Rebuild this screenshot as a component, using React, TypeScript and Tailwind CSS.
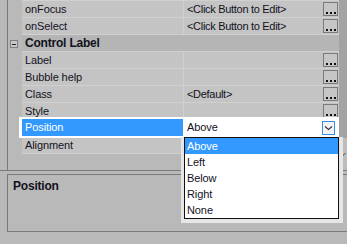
import React from "react";

type Row = {
  name: string;
  value?: string;
  button?: boolean;
  category?: boolean;
  short?: boolean;
};

const rows: Row[] = [
  { name: "onFocus", value: "<Click Button to Edit>", button: true },
  { name: "onSelect", value: "<Click Button to Edit>", button: true },
  { name: "Control Label", category: true },
  { name: "Label", button: true },
  { name: "Bubble help", button: true },
  { name: "Class", value: "<Default>", button: true },
];

const options = ["Above", "Left", "Below", "Right", "None"];

function EllipsisButton() {
  return (
    <div className="mt-[1px] flex h-[14px] w-[15px] items-end justify-start gap-[2px] border border-[#7a7a7a] bg-[#c6c6c6] pb-[1px] pl-[2px]">
      <span className="h-[2px] w-[2px] bg-[#111]" />
      <span className="h-[2px] w-[2px] bg-[#111]" />
      <span className="h-[2px] w-[2px] bg-[#111]" />
    </div>
  );
}

function PropertyRow({ row }: { row: Row }) {
  if (row.category) {
    return (
      <div className="flex h-[17px]">
        <div className="flex w-[14px] items-start pl-[2px] pt-[6px]">
          <div className="flex h-[8px] w-[8px] items-center justify-center border border-[#808080] bg-[#c8c8c8]">
            <span className="h-[1px] w-[4px] bg-[#222]" />
          </div>
        </div>
        <div className="flex-1 border-t border-[#d0d0d0] bg-[#b5b5b5] pl-[3px] text-[12px] font-bold leading-[16px] tracking-[-0.2px]">
          {row.name}
        </div>
      </div>
    );
  }
  return (
    <div className={`flex ${row.short ? "h-[15px]" : "h-[17px]"}`}>
      <div className="w-[14px]" />
      <div className="w-[162px] border-r border-t border-[#d0d0d0] bg-[#c4c4c4] pl-[3px] leading-[16px]">
        {row.name}
      </div>
      <div className="flex flex-1 justify-between border-t border-[#d0d0d0] bg-[#c4c4c4] pl-[3px] pr-[1px] leading-[16px] tracking-[-0.3px]">
        <span>{row.value ?? ""}</span>
        {row.button ? <EllipsisButton /> : null}
      </div>
    </div>
  );
}

export default function App() {
  return (
    <div
      className="relative h-[244px] w-[347px] overflow-hidden bg-[#b9b9b9] text-[11px] tracking-[-0.1px] text-[#12121c]"
      style={{ fontFamily: '"Liberation Sans", Arial, sans-serif' }}
    >
      <div className="flex h-[171px] border-b border-[#7a7a7a]">
        <div className="w-[7px]" />
        <div className="flex w-[332px] flex-col border-l border-[#7a7a7a]">
          {rows.map((row) => (
            <PropertyRow key={row.name} row={row} />
          ))}
          <PropertyRow row={{ name: "Style", button: true, short: true }} />

          <div className="flex h-[21px] bg-white">
            <div className="w-[11px] bg-[#b9b9b9]" />
            <div className="w-[3px]" />
            <div className="my-[2px] w-[161px] bg-[#3399ff] pl-[3px] leading-[17px] text-white">
              Position
            </div>
            <div className="flex flex-1 items-start justify-between pl-[4px] pr-[4px]">
              <span className="leading-[21px]">Above</span>
              <div className="mt-[4px] flex h-[14px] w-[13px] items-center justify-center border border-[#3a8ee6] bg-[#f4f4f4]">
                <svg width="9" height="6" viewBox="0 0 9 6">
                  <path d="M1 1.5 L4.5 4.5 L8 1.5" fill="none" stroke="#333" strokeWidth="1.1" />
                </svg>
              </div>
            </div>
          </div>

          <div className="flex h-[16px]">
            <div className="w-[14px]" />
            <div className="w-[162px] border-b border-r border-[#d0d0d0] bg-[#c4c4c4] pl-[3px] leading-[15px]">
              Alignment
            </div>
            <div className="flex-1 border-b border-[#d0d0d0] bg-[#c4c4c4]" />
          </div>
        </div>
        <div className="flex w-[8px] flex-col">
          <div className="flex-1 bg-[#a3a3a3]" />
          <div className="flex h-[32px] items-center justify-end bg-[#bdbdbd] pr-[1px]">
            <svg width="7" height="5" viewBox="0 0 7 5">
              <path d="M0.5 1 L3.5 4 L6.5 1" fill="none" stroke="#444" strokeWidth="1" />
            </svg>
          </div>
        </div>
      </div>

      <div className="ml-[7px] mt-[3px] h-[58px] border-b border-l border-t border-[#7a7a7a] pl-[5px] pt-[2px] text-[12px] font-bold leading-[18px] tracking-[-0.2px]">
        Position
      </div>

      <div className="absolute left-[181px] top-[137px] h-[86px] w-[162px] bg-[#e6e6e6]">
        <div className="ml-[3px] w-[155px] border border-[#111] bg-white">
          {options.map((opt, i) => (
            <div
              key={opt}
              className={`h-[16px] pl-[2px] leading-[16px] ${i === 0 ? "bg-[#3399ff] text-white" : ""}`}
            >
              {opt}
            </div>
          ))}
        </div>
      </div>
    </div>
  );
}
